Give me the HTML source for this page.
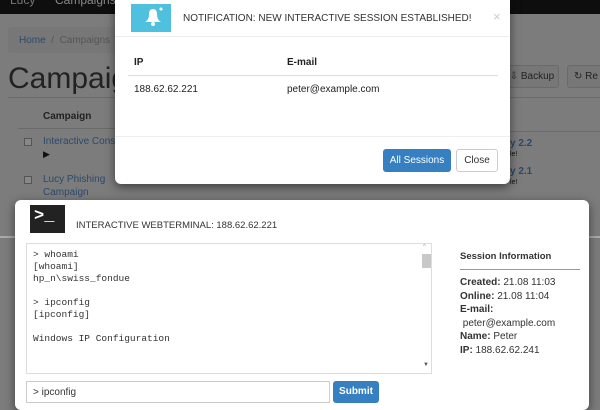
<!DOCTYPE html>
<html><head><meta charset="utf-8"><style>
*{margin:0;padding:0;box-sizing:border-box}
body{width:600px;height:400px;overflow:hidden;position:relative;background:#7c7c7c;font-family:"Liberation Sans",sans-serif;color:#222}
.a{position:absolute}
.nav{left:0;top:0;width:600px;height:14px;background:#0e0e0e;color:#777;font-size:12px;overflow:hidden}
.modal{background:#fff;border-radius:6px;box-shadow:0 3px 10px rgba(0,0,0,.5)}
.mono{font-family:"Liberation Mono",monospace;font-size:9.5px;line-height:12px;color:#333}
.btn{border-radius:3px;font-size:10px;text-align:center}
.si{font-size:10px;line-height:13.5px;color:#333}
</style></head><body>
<div class="a nav"><span class="a" style="left:10px;top:-7px">Lucy</span><span class="a" style="left:55px;top:-7px;color:#888">Campaigns</span></div>
<div class="a" style="left:8px;top:27px;width:180px;height:26px;background:#777;border-radius:3px"></div>
<div class="a" style="left:19px;top:35px;font-size:10px;color:#2b4a6a">Home <span style="color:#555">&nbsp;/&nbsp; Campaigns</span></div>
<div class="a" style="left:8px;top:62px;font-size:30px;color:#222">Campaigns</div>
<div class="a" style="left:8px;top:97px;width:110px;height:1px;background:#6c6c6c"></div>
<div class="a" style="left:43px;top:111px;font-size:10px;font-weight:bold;color:#222">Campaign</div>
<div class="a" style="left:18px;top:128px;width:100px;height:1px;background:#6a6a6a"></div>
<div class="a" style="left:24px;top:138px;width:8px;height:8px;border:1px solid #555;background:#888"></div>
<div class="a" style="left:43px;top:136px;font-size:10px;color:#2b4a6a">Interactive Conso</div>
<div class="a" style="left:43px;top:149px;font-size:9px;color:#111">▶</div>
<div class="a" style="left:24px;top:176px;width:8px;height:8px;border:1px solid #555;background:#888"></div>
<div class="a" style="left:43px;top:173px;font-size:10px;color:#2b4a6a;line-height:13px">Lucy Phishing<br>Campaign</div>
<div class="a" style="left:0;top:236px;width:15px;height:2px;background:#aaa"></div>
<div class="a" style="left:589px;top:236px;width:11px;height:2px;background:#aaa"></div>
<div class="a btn" style="left:505px;top:65px;width:54px;height:23px;background:#777;border:1px solid #6a6a6a;color:#222;line-height:21px">⇩ Backup</div>
<div class="a btn" style="left:567px;top:65px;width:40px;height:23px;background:#777;border:1px solid #6a6a6a;color:#222;line-height:21px;text-align:left;padding-left:6px">↻ Re</div>
<div class="a" style="left:430px;top:97px;width:170px;height:1px;background:#6c6c6c"></div>
<div class="a" style="left:430px;top:131px;width:170px;height:1px;background:#6c6c6c"></div>
<div class="a" style="left:510px;top:138px;font-size:10px;font-weight:bold;color:#2b4a6a">y 2.2</div>
<div class="a" style="left:510px;top:151px;font-size:7px;color:#111">le!</div>
<div class="a" style="left:510px;top:166px;font-size:10px;font-weight:bold;color:#2b4a6a">y 2.1</div>
<div class="a" style="left:510px;top:179px;font-size:7px;color:#111">le!</div>

<div class="a modal" style="left:115px;top:-6px;width:395px;height:190px">
 <div class="a" style="left:16px;top:10px;width:40px;height:28px;background:#4fc0de"></div>
 <svg class="a" style="left:26px;top:12px" width="24" height="24" viewBox="0 0 24 24"><path d="M4 16 Q8 14 8 8 Q8 3 12 3 Q16 3 16 8 Q16 14 20 16 Z" fill="#fff"/><circle cx="12" cy="18" r="2" fill="#fff"/><circle cx="20" cy="3" r="1.5" fill="#fff"/></svg>
 <div class="a" style="left:68px;top:19px;font-size:10px;color:#333">NOTIFICATION: NEW INTERACTIVE SESSION ESTABLISHED!</div>
 <div class="a" style="left:378px;top:15px;font-size:13px;color:#ccc">×</div>
 <div class="a" style="left:0;top:42px;width:395px;height:1px;background:#eee"></div>
 <div class="a" style="left:19px;top:63px;font-size:10px;font-weight:bold">IP</div>
 <div class="a" style="left:172px;top:63px;font-size:10px;font-weight:bold">E-mail</div>
 <div class="a" style="left:13px;top:81px;width:370px;height:1px;background:#ddd"></div>
 <div class="a" style="left:19px;top:90px;font-size:10px;color:#222">188.62.62.221</div>
 <div class="a" style="left:172px;top:90px;font-size:10px;color:#222">peter@example.com</div>
 <div class="a" style="left:0;top:142px;width:395px;height:1px;background:#eee"></div>
 <div class="a btn" style="left:268px;top:155px;width:68px;height:23px;background:#3680c2;color:#fff;line-height:23px">All Sessions</div>
 <div class="a btn" style="left:341px;top:155px;width:42px;height:23px;border:1px solid #ccc;color:#333;line-height:21px">Close</div>
</div>

<div class="a modal" style="left:15px;top:200px;width:574px;height:210px">
 <div class="a" style="left:15px;top:5px;width:35px;height:28px;background:#222"></div>
 <div class="a" style="left:19px;top:7px;font-size:17px;font-weight:bold;color:#fff;font-family:'Liberation Mono',monospace">&gt;_</div>
 <div class="a" style="left:61px;top:20px;font-size:9.5px;color:#333">INTERACTIVE WEBTERMINAL: 188.62.62.221</div>
 <div class="a" style="left:11px;top:43px;width:406px;height:131px;border:1px solid #ddd;overflow:hidden">
  <div class="a mono" style="left:6px;top:5px;white-space:pre">&gt; whoami
[whoami]
hp_n\swiss_fondue

&gt; ipconfig
[ipconfig]

Windows IP Configuration



Wireless LAN adapter Wireless Network Connection 2:</div>
  <div class="a" style="left:395px;top:10px;width:9px;height:14px;background:#c8c8c8"></div>
  <div class="a" style="left:396px;top:0;font-size:6px;color:#999">^</div>
  <div class="a" style="left:396px;top:118px;font-size:6px;color:#555">▼</div>
 </div>
 <div class="a" style="left:11px;top:181px;width:304px;height:22px;border:1px solid #ccc;font-size:10px;color:#333;padding:5px 0 0 6px">&gt; ipconfig</div>
 <div class="a btn" style="left:318px;top:181px;width:46px;height:22px;background:#3680c2;color:#fff;line-height:22px;font-weight:bold">Submit</div>
 <div class="a" style="left:445px;top:51px;font-size:9.5px;font-weight:bold;color:#333">Session Information</div>
 <div class="a" style="left:445px;top:69px;width:120px;height:1px;background:#999"></div>
 <div class="a si" style="left:445px;top:76px"><b>Created:</b> 21.08 11:03<br><b>Online:</b> 21.08 11:04<br><b>E-mail:</b><br>&nbsp;peter@example.com<br><b>Name:</b> Peter<br><b>IP:</b> 188.62.62.241</div>
</div>
</body></html>
